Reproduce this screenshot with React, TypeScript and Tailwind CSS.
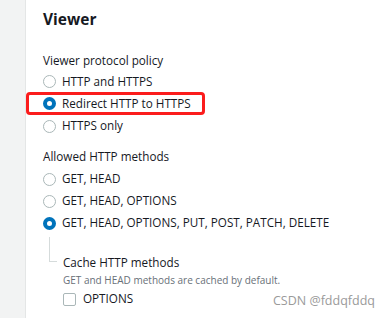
import React from "react";

const font = { fontFamily: '"Open Sans", "Noto Sans", sans-serif' };

function Radio({ checked }: { checked?: boolean }) {
  return checked ? (
    <span className="box-border inline-block w-[13px] h-[13px] rounded-full border-[4px] border-[#0073bb] bg-white shrink-0" />
  ) : (
    <span className="box-border inline-block w-[13px] h-[13px] rounded-full border border-[#aab7b8] bg-white shrink-0" />
  );
}

function RadioRow({ label, checked, h }: { label: string; checked?: boolean; h: string }) {
  return (
    <div className={`flex items-center ${h}`}>
      <Radio checked={checked} />
      <span className="ml-[6px] text-[11.7px] text-[#16191f] whitespace-nowrap">{label}</span>
    </div>
  );
}

export default function App() {
  return (
    <div className="relative w-[390px] h-[318px] bg-white flex overflow-hidden" style={font}>
      <div className="w-[26px] h-full bg-[#f2f3f3] border-r border-[#e4e6e6] shrink-0" />
      <div className="flex flex-col pl-[17px]">
        <div className="h-[40px] flex items-center text-[15.5px] font-bold text-[#16191f]">Viewer</div>
        <div className="mt-[11px] h-[20px] flex items-center text-[11.7px] text-[#16191f]">Viewer protocol policy</div>
        <RadioRow label="HTTP and HTTPS" h="h-[21px]" />
        <div className="-ml-[17px] w-[179px] h-[23px] box-border border-[3px] border-[#fb1c1c] rounded-[4px] flex items-center pl-[14px]">
          <Radio checked />
          <span className="ml-[6px] text-[11.7px] text-[#16191f] whitespace-nowrap">Redirect HTTP to HTTPS</span>
        </div>
        <RadioRow label="HTTPS only" h="h-[22px]" />
        <div className="mt-[9px] h-[22px] flex items-center text-[11.7px] text-[#16191f]">Allowed HTTP methods</div>
        <RadioRow label="GET, HEAD" h="h-[22px]" />
        <RadioRow label="GET, HEAD, OPTIONS" h="h-[22px]" />
        <RadioRow label="GET, HEAD, OPTIONS, PUT, POST, PATCH, DELETE" checked h="h-[22px]" />
        <div className="flex">
          <div className="w-[20px] shrink-0">
            <div className="ml-[6px] mt-[3px] w-[8px] h-[25px] border-l border-b border-[#d5dbdb]" />
          </div>
          <div className="flex flex-col pt-[20px]">
            <div className="h-[18px] flex items-center text-[11.7px] text-[#16191f] whitespace-nowrap">Cache HTTP methods</div>
            <div className="h-[16px] flex items-center text-[10px] text-[#687078] whitespace-nowrap">GET and HEAD methods are cached by default.</div>
            <div className="mt-[1px] h-[20px] flex items-center">
              <span className="box-border inline-block w-[13px] h-[13px] rounded-[2px] border border-[#aab7b8] bg-white shrink-0" />
              <span className="ml-[7px] text-[11.7px] text-[#16191f]">OPTIONS</span>
            </div>
          </div>
        </div>
      </div>
      <div className="absolute left-[273px] top-[292px] text-[12.5px] text-[#9a9a9a] whitespace-nowrap">CSDN @fddqfddq</div>
    </div>
  );
}
